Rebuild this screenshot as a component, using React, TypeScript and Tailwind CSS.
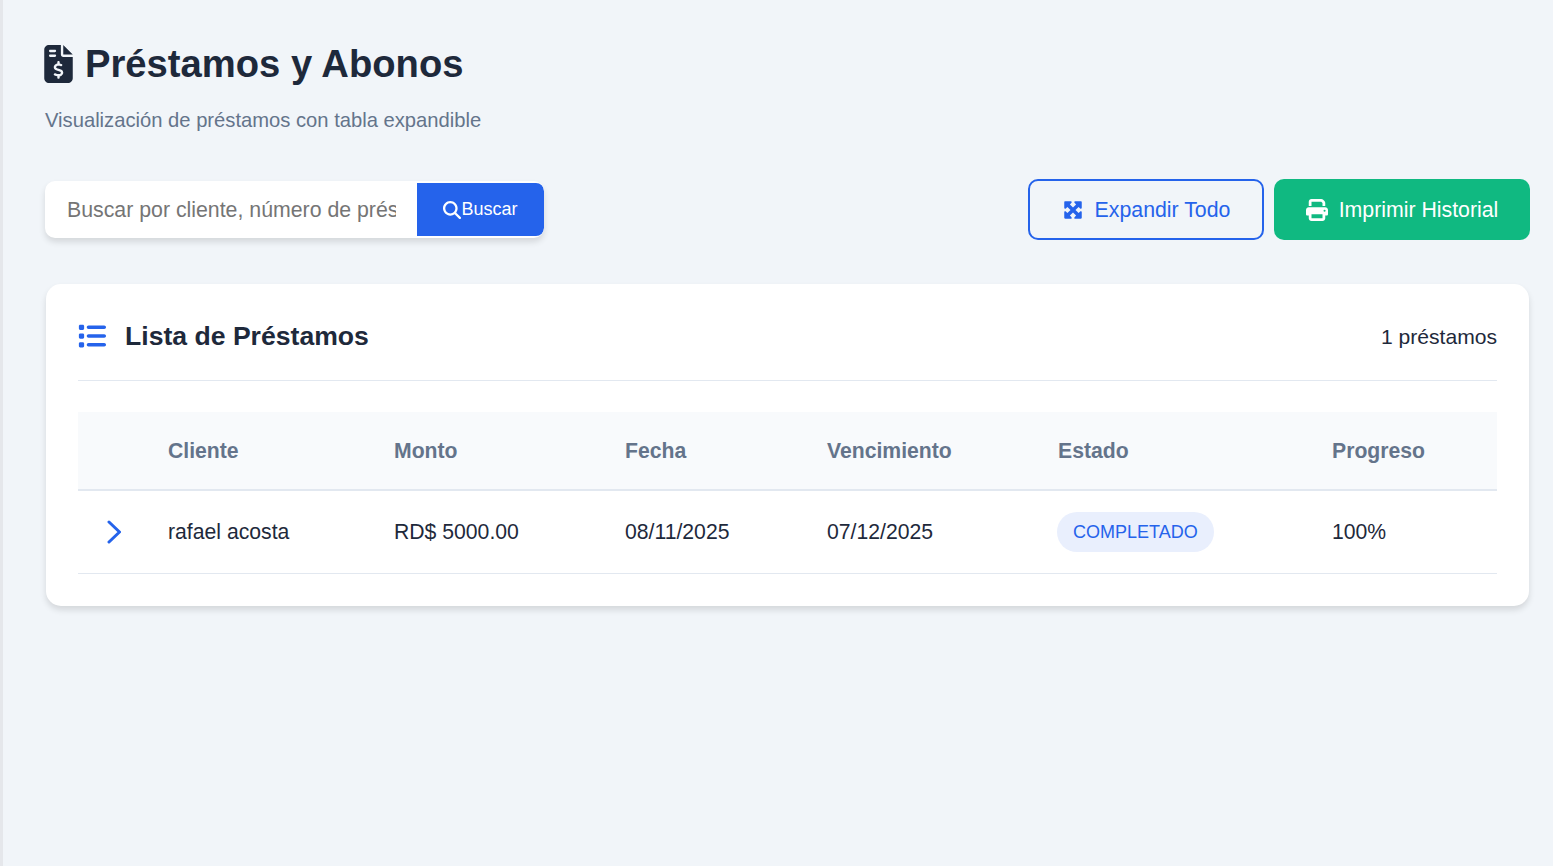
import { FaFileInvoiceDollar, FaMagnifyingGlass, FaPrint, FaList, FaMaximize } from 'react-icons/fa6'

const headers = [
  { label: 'chevron', width: 'w-[74px]' },
  { label: 'Cliente', width: 'w-[226px]' },
  { label: 'Monto', width: 'w-[231px]' },
  { label: 'Fecha', width: 'w-[202px]' },
  { label: 'Vencimiento', width: 'w-[231px]' },
  { label: 'Estado', width: 'w-[274px]' },
  { label: 'Progreso', width: 'w-[181px]' },
]

export default function App() {
  return (
    <div className="min-h-[866px] bg-[#f1f5f9] text-[#1e293b] font-['Liberation_Sans',Arial,sans-serif] flex">
      {/* Sidebar edge */}
      <div className="w-[3px] shrink-0 bg-[#e5e7eb]" />

      <div className="flex-1 pl-[42px] pr-[23px] pt-[36px]">
        {/* Header */}
        <div className="flex items-center gap-[12px] h-[56px]">
          <FaFileInvoiceDollar className="w-[29px] h-[38px] -ml-[1px] text-[#1e293b]" />
          <h1 className="text-[38.2px] font-bold leading-none">Préstamos y Abonos</h1>
        </div>
        <p className="mt-[14px] text-[20.2px] leading-[28px] text-[#64748b]">
          Visualización de préstamos con tabla expandible
        </p>

        {/* Toolbar */}
        <div className="mt-[45px] flex items-center justify-between">
          <div className="flex w-[499px] h-[57px] rounded-[10px] bg-white shadow-[0_4px_6px_rgba(0,0,0,0.12)] overflow-hidden">
            <input
              className="w-[372px] pl-[22px] pr-[21px] pt-[2px] text-[21.3px] outline-none placeholder:text-[#757575]"
              placeholder="Buscar por cliente, número de préstamo..."
            />
            <button className="my-[2px] flex-1 flex items-center justify-center bg-[#2563eb] text-white text-[18px] rounded-r-[8px]">
              <FaMagnifyingGlass className="text-[18px]" />
              <span>Buscar</span>
            </button>
          </div>

          <div className="flex gap-[10px]">
            <button className="w-[236px] h-[61px] pl-[1px] flex items-center justify-center gap-[12px] rounded-[10px] border-2 border-[#2563eb] text-[#2563eb] text-[21.3px]">
              <FaMaximize className="text-[20px]" />
              <span className="pt-[2px]">Expandir Todo</span>
            </button>
            <button className="w-[256px] h-[61px] flex items-center justify-center gap-[11px] rounded-[10px] bg-[#10b981] text-white text-[21.3px]">
              <FaPrint className="text-[22px]" />
              <span className="pt-[2px]">Imprimir Historial</span>
            </button>
          </div>
        </div>

        {/* Card */}
        <div className="mt-[44px] mx-[1px] rounded-[15px] bg-white px-[32px] pt-[32px] pb-[32px] shadow-[0_4px_6px_rgba(0,0,0,0.12)]">
          <div className="flex items-center justify-between h-[40px] pb-[24px] border-b border-[#e2e8f0] box-content">
            <div className="flex items-center gap-[19px]">
              <FaList className="text-[28px] text-[#2563eb]" />
              <h2 className="pt-[2px] text-[26.6px] font-bold">Lista de Préstamos</h2>
            </div>
            <span className="pt-[2px] text-[21.1px]">1 préstamos</span>
          </div>

          <table className="mt-[31px] w-full table-fixed border-collapse text-[21.2px]">
            <thead>
              <tr className="h-[78px] bg-[#f8fafc] border-b-2 border-[#e2e8f0]">
                {headers.map((h) => (
                  <th key={h.label} className={`${h.width} px-[16px] text-left font-bold text-[#64748b]`}>
                    {h.label === 'chevron' ? '' : h.label}
                  </th>
                ))}
              </tr>
            </thead>
            <tbody>
              <tr className="h-[83px] border-b border-[#e2e8f0]">
                <td className="px-[16px]">
                  <svg viewBox="0 0 14 24" className="ml-[13px] w-[14px] h-[24px] text-[#2563eb]" fill="none" stroke="currentColor" strokeWidth="3" strokeLinecap="round" strokeLinejoin="round">
                    <path d="M2 2 L12.5 12 L2 22" />
                  </svg>
                </td>
                <td className="px-[16px]">rafael acosta</td>
                <td className="px-[16px]">RD$ 5000.00</td>
                <td className="px-[16px]">08/11/2025</td>
                <td className="px-[16px]">07/12/2025</td>
                <td className="px-[16px]">
                  <span className="-ml-[1px] inline-block rounded-full bg-[#e9effd] px-[16px] py-[8px] text-[18px] leading-[24px] text-[#2563eb]">
                    COMPLETADO
                  </span>
                </td>
                <td className="px-[16px]">100%</td>
              </tr>
            </tbody>
          </table>
        </div>
      </div>
    </div>
  )
}
